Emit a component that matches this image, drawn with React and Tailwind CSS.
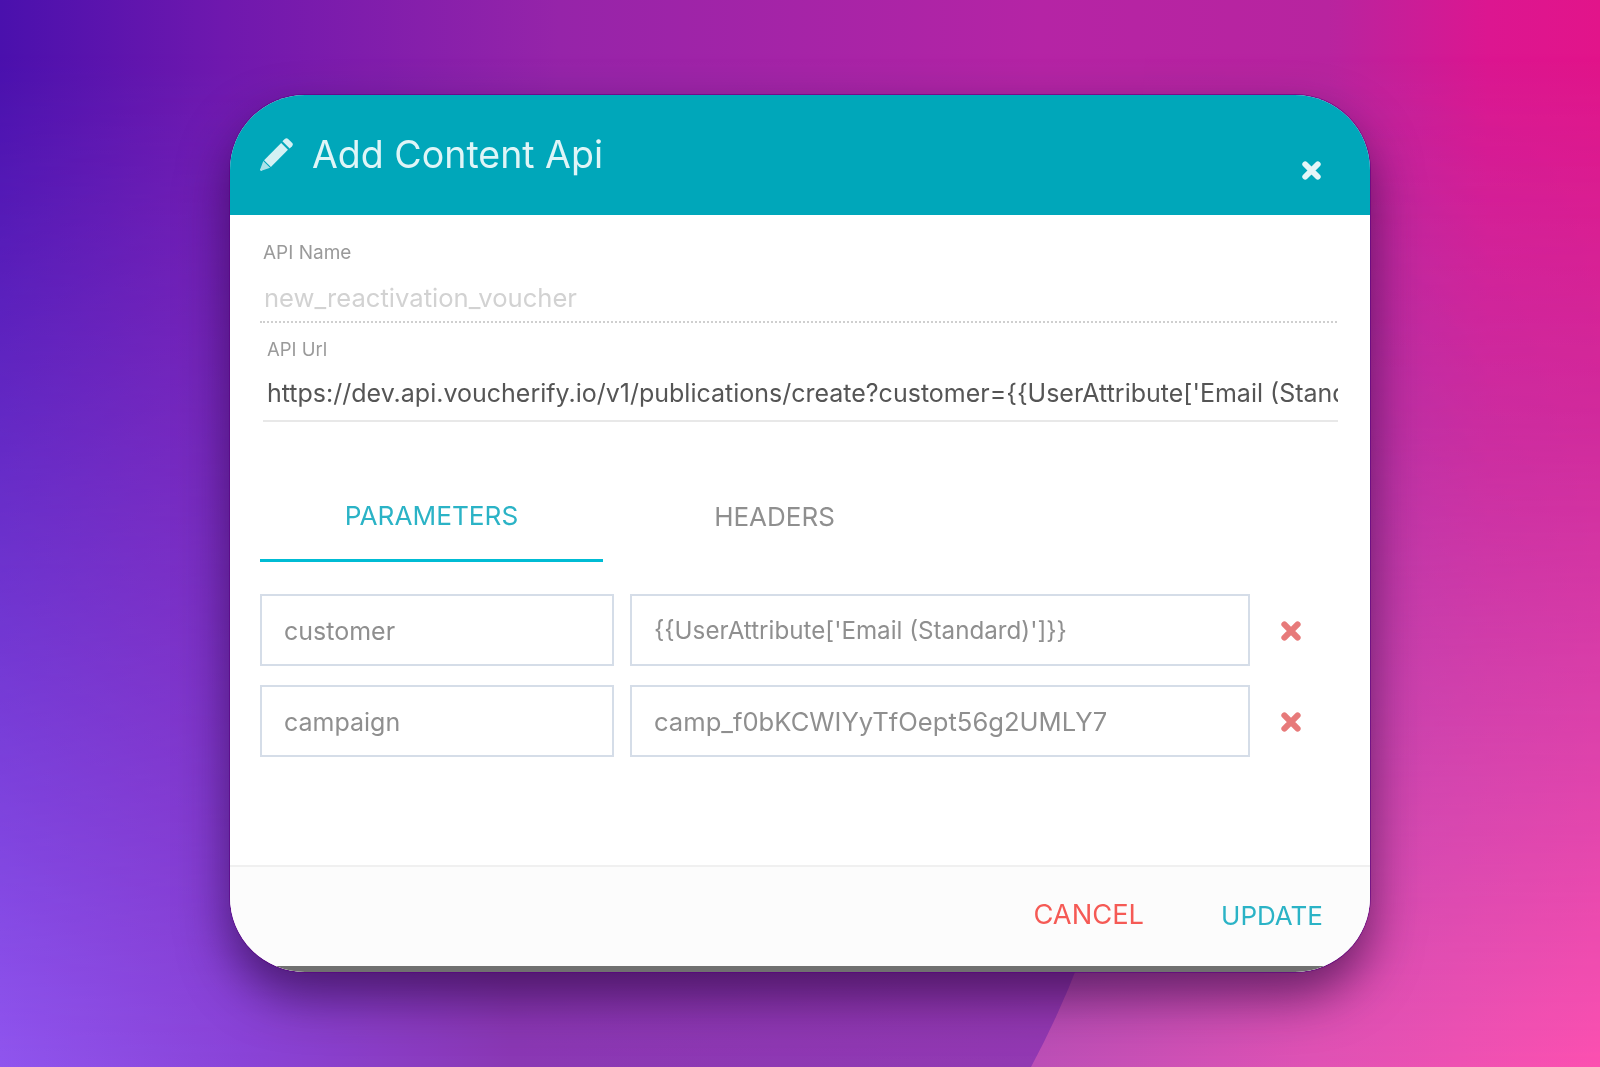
import React from 'react'

function Cross({ className }) {
  return (
    <svg viewBox="0 0 20 20" className={className} fill="none" stroke="currentColor" strokeWidth="5.5" strokeLinecap="round">
      <path d="M4 4 L16 16 M16 4 L4 16" />
    </svg>
  )
}

function Pencil() {
  return (
    <svg viewBox="0 0 34 34" className="h-[33px] w-[33px] text-[#d4f1f4]" fill="currentColor">
      <path d="M25.5 1 a2.5 2.5 0 0 1 3.5 0 l4 4 a2.5 2.5 0 0 1 0 3.5 l-2.4 2.4 -7.5 -7.5z" />
      <path d="M21.8 5.2 l7 7 -17.6 17.6 -7 -7z" />
      <path d="M3.4 23.6 l7 7 -8.2 3 a1.2 1.2 0 0 1 -1.8 -1.8z" opacity="0.8" />
    </svg>
  )
}

// the wallpaper: two horizontal colour strips faded into each other, plus the wave
function Wallpaper() {
  return (
    <svg viewBox="0 0 1600 1067" className="absolute inset-0 h-full w-full">
      <defs>
        <linearGradient id="top" x1="0" x2="1" y1="0" y2="0">
          <stop offset="0" stopColor="#4a10ad" />
          <stop offset="0.14" stopColor="#6f18ae" />
          <stop offset="0.35" stopColor="#9624a9" />
          <stop offset="0.65" stopColor="#b524a5" />
          <stop offset="0.83" stopColor="#b8249f" />
          <stop offset="0.93" stopColor="#dc1690" />
          <stop offset="1" stopColor="#e2148a" />
        </linearGradient>
        <linearGradient id="bottom" x1="0" x2="1" y1="0" y2="0">
          <stop offset="0" stopColor="#9055ee" />
          <stop offset="0.15" stopColor="#8a44d8" />
          <stop offset="0.32" stopColor="#8a38b4" />
          <stop offset="1" stopColor="#9a3ab0" />
        </linearGradient>
        <linearGradient id="fade" x1="0" x2="0" y1="0" y2="1">
          <stop offset="0.05" stopColor="#000" />
          <stop offset="1" stopColor="#fff" />
        </linearGradient>
        <mask id="fadeMask">
          <rect width="1600" height="1067" fill="url(#fade)" />
        </mask>
        <linearGradient id="wave" gradientUnits="userSpaceOnUse" x1="1030" x2="1600" y1="0" y2="0">
          <stop offset="0" stopColor="#bb4fb6" />
          <stop offset="0.5" stopColor="#e052b4" />
          <stop offset="1" stopColor="#fc50b0" />
        </linearGradient>
        <linearGradient id="waveFade" x1="0" x2="0" y1="0" y2="1">
          <stop offset="0.05" stopColor="#000" />
          <stop offset="0.4" stopColor="#333" />
          <stop offset="1" stopColor="#fff" />
        </linearGradient>
        <mask id="waveMask">
          <rect width="1600" height="1067" fill="url(#waveFade)" />
        </mask>
      </defs>
      <rect width="1600" height="1067" fill="url(#top)" />
      <rect width="1600" height="1067" fill="url(#bottom)" mask="url(#fadeMask)" />
      <path d="M1031 1067 Q1075 985 1100 900 Q1110 500 1150 0 L1600 0 L1600 1067Z" fill="url(#wave)" mask="url(#waveMask)" />
    </svg>
  )
}

function ParamRow({ name, value, valueSize }) {
  return (
    <div className="flex items-center">
      <div className="flex h-[72px] w-[354px] items-center border-2 border-[#d5dde8] pl-[22px] pt-[3px] text-[25px] text-[#8f8f8f] blur-[0.4px]">{name}</div>
      <div className={`ml-4 flex h-[72px] w-[620px] items-center border-2 border-[#d5dde8] pl-[22px] pt-[3px] text-[#8f8f8f] blur-[0.4px] ${valueSize}`}>{value}</div>
      <Cross className="ml-[30px] mt-[2px] h-[22px] w-[22px] text-[#e77a7a] blur-[0.4px]" />
    </div>
  )
}

export default function App() {
  return (
    <div className="relative flex h-[1067px] w-full items-start justify-center overflow-hidden pt-[95px] font-['Inter',sans-serif]">
      <Wallpaper />
      <div className="relative flex h-[877px] w-[1140px] flex-col overflow-hidden rounded-[75px] bg-white shadow-[0_0_0_1px_rgba(90,0,130,0.6),0_24px_50px_rgba(30,0,50,0.6)]">
        <div className="flex h-[120px] shrink-0 items-start bg-[#00a7ba] pl-[30px] pr-[48px]">
          <div className="mt-[43px] blur-[0.4px]"><Pencil /></div>
          <div className="ml-[19px] mt-[35px] text-[37.5px] leading-[50px] text-[#dff5f7] blur-[0.4px]">Add Content Api</div>
          <Cross className="ml-auto mt-[65px] h-[21px] w-[21px] text-[#e6f6f8] blur-[0.4px]" />
        </div>

        <div className="flex flex-1 flex-col pl-[30px] pr-[33px] pt-[26px]">
          <div className="pl-[3px] text-[19px] leading-[24px] text-[#9a9a9a] blur-[0.4px]">API Name</div>
          <div className="border-b-2 border-dotted border-[#cfcfcf] pb-[6px] pl-[4px] pt-[16px] text-[25.6px] leading-[34px] text-[#d2d2d2]">
            <span className="blur-[0.4px]">new_reactivation_voucher</span>
          </div>

          <div className="ml-[3px] mr-[-1px] border-b-2 border-[#e8e8e8]">
            <div className="pl-[4px] pt-[14px] text-[18.5px] leading-[24px] text-[#9a9a9a] blur-[0.4px]">API Url</div>
            <div className="overflow-hidden whitespace-nowrap pb-[10px] pl-[4px] pr-[3px] pt-[15px] text-[25px] leading-[34px] text-[#555] blur-[0.4px]">
              https://dev.api.voucherify.io/v1/publications/create?customer={'{{'}UserAttribute['Email (Standard)']{'}}'}
            </div>
          </div>

          <div className="mt-[48px] flex h-[92px] items-start">
            <div className="flex h-[92px] w-[343px] items-center justify-center border-b-[3px] border-[#00bcd4] pt-[3px] text-[26.2px] text-[#2bb3c6]">
              <span className="blur-[0.4px]">PARAMETERS</span>
            </div>
            <div className="flex h-[92px] w-[343px] items-center justify-center text-[26px] text-[#8f8f8f] blur-[0.4px]">HEADERS</div>
          </div>

          <div className="mt-[32px] flex flex-col gap-[19px]">
            <ParamRow name="customer" value="{{UserAttribute['Email (Standard)']}}" valueSize="text-[24.2px]" />
            <ParamRow name="campaign" value="camp_f0bKCWIYyTfOept56g2UMLY7" valueSize="text-[25.6px]" />
          </div>
        </div>

        <div className="flex h-[107px] shrink-0 items-center justify-end border-t-2 border-[#f0f0f0] bg-[#fcfcfc] pb-[9px] pr-[47px] shadow-[inset_0_-6px_0_#707070]">
          <span className="text-[27.3px] text-[#f55a55] blur-[0.4px]">CANCEL</span>
          <span className="ml-[77px] text-[26px] text-[#2bb3c6] blur-[0.4px]">UPDATE</span>
        </div>
      </div>
    </div>
  )
}
